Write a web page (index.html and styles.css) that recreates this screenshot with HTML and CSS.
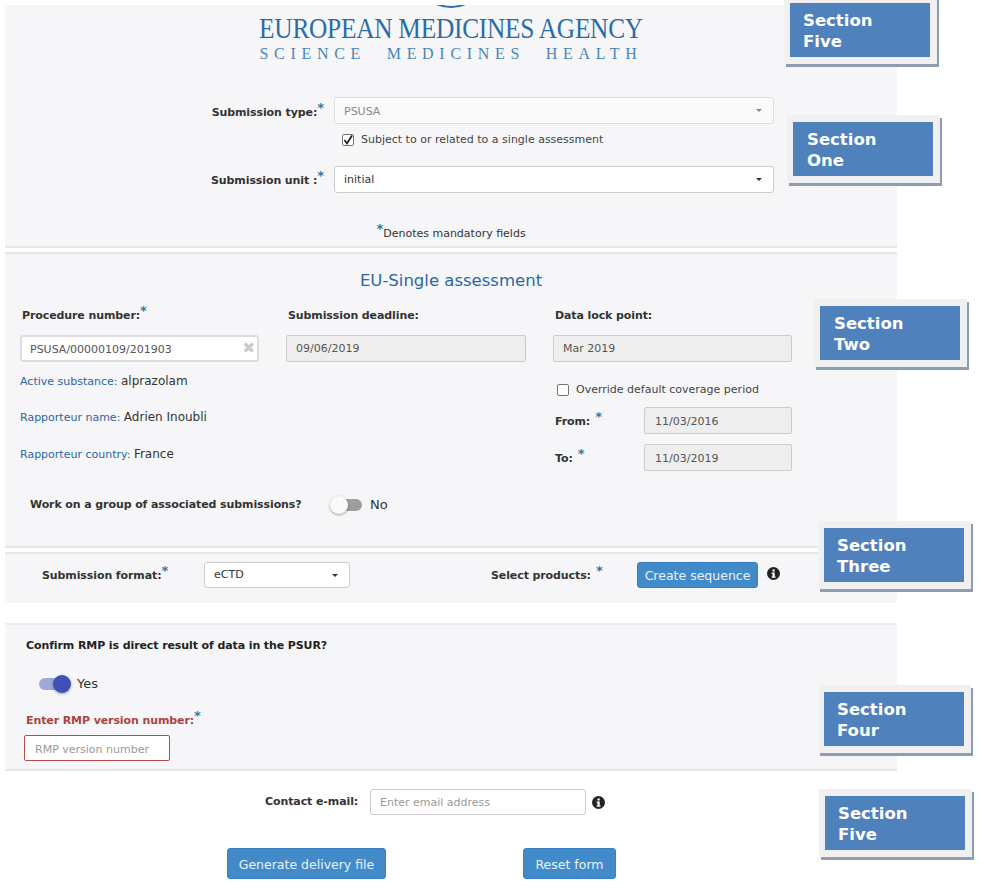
FILE: index.html
```html
<!DOCTYPE html>
<html lang="en">
<head>
<meta charset="utf-8">
<title>Submission form</title>
<link rel="stylesheet" href="styles.css">
</head>
<body>
<div class="page">
  <section class="panel s1">
    <div class="logo">
      <svg class="arc" width="40" height="4" viewBox="0 0 40 4"><path d="M1 -3 Q20 7 39 -3" fill="none" stroke="#2a6ca8" stroke-width="2"/></svg>
      <div class="logo-main">EUROPEAN MEDICINES AGENCY</div>
      <div class="logo-sub">SCIENCE MEDICINES HEALTH</div>
    </div>
    <div class="form-row">
      <div class="lbl lbl-top b">Submission type:<sup class="req">*</sup></div>
      <div class="sel wide muted">PSUSA<span class="caret grey"></span></div>
    </div>
    <div class="check-row indent">
      <span class="box"><svg width="12" height="12" viewBox="0 0 12 12"><path d="M2.5 6 L5 9.5 L10 1.5" fill="none" stroke="#222" stroke-width="1.8"/></svg></span>
      <span>Subject to or related to a single assessment</span>
    </div>
    <div class="form-row second">
      <div class="lbl b">Submission unit :<sup class="req">*</sup></div>
      <div class="sel wide white">initial<span class="caret"></span></div>
    </div>
    <div class="mandatory"><sup class="req">*</sup>Denotes mandatory fields</div>
  </section>

  <section class="panel s2">
    <h2 class="title">EU-Single assessment</h2>
    <div class="cols">
      <div class="col">
        <div class="b head">Procedure number:<sup class="req">*</sup></div>
        <div class="input white clear">PSUSA/00000109/201903<span class="x">✖</span></div>
        <div class="info first"><span class="key">Active substance:</span> <span class="val">alprazolam</span></div>
        <div class="info"><span class="key">Rapporteur name:</span> <span class="val">Adrien Inoubli</span></div>
        <div class="info third"><span class="key">Rapporteur country:</span> <span class="val">France</span></div>
      </div>
      <div class="col">
        <div class="b head">Submission deadline:</div>
        <div class="input off">09/06/2019</div>
      </div>
      <div class="col">
        <div class="b head">Data lock point:</div>
        <div class="input off">Mar 2019</div>
        <div class="check-row over"><span class="box"></span><span>Override default coverage period</span></div>
        <div class="date-row"><span class="b date-lbl">From:<sup class="req gap">*</sup></span><div class="input off date">11/03/2016</div></div>
        <div class="date-row"><span class="b date-lbl">To:<sup class="req gap">*</sup></span><div class="input off date">11/03/2019</div></div>
      </div>
    </div>
    <div class="group-row">
      <span class="b group-q">Work on a group of associated submissions?</span>
      <span class="toggle"><span class="track"></span><span class="knob"></span></span>
      <span class="val big">No</span>
    </div>
  </section>

  <section class="panel s3">
    <span class="b f-lbl">Submission format:<sup class="req">*</sup></span>
    <div class="sel fmt white">eCTD<span class="caret"></span></div>
    <span class="b p-lbl">Select products:<sup class="req gap">*</sup></span>
    <button class="btn seq" type="button">Create sequence</button>
    <svg class="i-icon" width="13" height="13" viewBox="0 0 13 13"><circle cx="6.5" cy="6.5" r="6.5" fill="#222"/><rect x="5.5" y="2.5" width="2.2" height="2" fill="#fff"/><path d="M4.6 5.5H7.7V9.6H8.6V10.8H4.6V9.6H5.5V6.7H4.6Z" fill="#fff"/></svg>
  </section>

  <section class="panel s4">
    <div class="b q4">Confirm RMP is direct result of data in the PSUR?</div>
    <div class="yes-row">
      <span class="toggle on"><span class="track"></span><span class="knob"></span></span>
      <span class="val big">Yes</span>
    </div>
    <div class="b red">Enter RMP version number:<sup class="req">*</sup></div>
    <div class="input rmp">RMP version number</div>
  </section>

  <section class="s5">
    <div class="mail-row">
      <span class="b mail-lbl">Contact e-mail:</span>
      <div class="input mail">Enter email address</div>
      <svg class="i-icon" width="13" height="13" viewBox="0 0 13 13"><circle cx="6.5" cy="6.5" r="6.5" fill="#222"/><rect x="5.5" y="2.5" width="2.2" height="2" fill="#fff"/><path d="M4.6 5.5H7.7V9.6H8.6V10.8H4.6V9.6H5.5V6.7H4.6Z" fill="#fff"/></svg>
    </div>
    <div class="actions">
      <button class="btn gen" type="button">Generate delivery file</button>
      <button class="btn reset" type="button">Reset form</button>
    </div>
  </section>

  <div class="tag t-a"><div class="tag-in">Section<br>Five</div></div>
  <div class="tag t-b"><div class="tag-in">Section<br>One</div></div>
  <div class="tag t-c"><div class="tag-in">Section<br>Two</div></div>
  <div class="tag t-d"><div class="tag-in">Section<br>Three</div></div>
  <div class="tag t-e"><div class="tag-in">Section<br>Four</div></div>
  <div class="tag t-f"><div class="tag-in">Section<br>Five</div></div>
</div>
</body>
</html>
```
FILE: styles.css
```css
* { box-sizing: border-box; }
html, body { margin: 0; background: #fff; }
body { font: 11px/14px "DejaVu Sans", Verdana, sans-serif; color: #333; }
.page { position: relative; width: 982px; height: 888px; padding-top: 5px; overflow: hidden; }
.panel { margin-left: 5px; width: 892px; background: #f6f6f8; }
.b { font-weight: 700; letter-spacing: -0.1px; }
.req { color: #2a7ba6; font-size: 13px; line-height: 0; vertical-align: 4px; font-weight: 700; letter-spacing: 0; }
.req.gap { margin-left: 5px; }

.s1 { height: 243px; border-bottom: 2px solid #e6e6e9; }
.logo { text-align: center; height: 92px; color: #2a6ca8; font-family: "Liberation Serif", serif; }
.arc { display: block; margin: 0 auto; }
.logo-main { font-size: 30px; line-height: 30px; letter-spacing: -0.3px; margin-top: 4px; white-space: nowrap; transform: scaleX(0.845); }
.logo-sub { font-size: 16px; line-height: 18px; letter-spacing: 5.7px; word-spacing: 11px; margin-top: 2px; color: #4a85b8; white-space: nowrap; }
.form-row { display: flex; align-items: center; }
.form-row .lbl { width: 320px; padding: 3px 1px 0 0; text-align: right; white-space: nowrap; }
.form-row .lbl-top { padding-top: 5px; }
.form-row.second { margin-top: 19px; }
.sel { position: relative; height: 27px; line-height: 26px; padding-left: 9px; border: 1px solid #ddd; border-radius: 3px; background: #fafafa; }
.sel.muted { line-height: 27px; }
.sel.white { background: #fff; border-color: #ccc; }
.sel.wide { width: 440px; margin-left: 9px; }
.muted { color: #888; }
.caret { position: absolute; right: 11px; top: 11px; width: 0; height: 0; border: 3px solid transparent; border-top: 3px solid #333; border-bottom: 0; }
.caret.grey { border-top-color: #888; }
.check-row { display: flex; align-items: center; gap: 7px; color: #444; }
.indent { margin: 9px 0 0 337px; }
.box { display: block; width: 12px; height: 12px; border: 1px solid #767676; border-radius: 2px; background: #fff; line-height: 0; }
.box svg { margin: -1px; }
.mandatory { text-align: center; margin-top: 34px; }

.s2 { height: 296px; margin-top: 4px; border-top: 2px solid #e6e6e9; border-bottom: 2px solid #e6e6e9; padding: 17px 15px 0; }
.title { margin: 0; text-align: center; font-size: 16.5px; line-height: 20px; font-weight: 400; color: #2a66a8; }
.cols { display: grid; grid-template-columns: 239px 240px 239px; column-gap: 27px; margin-top: 18px; }
.head { padding-left: 2px; height: 14px; }
.input { height: 27px; line-height: 26px; padding-left: 9px; border: 2px solid #e0e0e0; border-radius: 2px; color: #555; position: relative; }
.col .input { margin-top: 12px; }
.white { background: #fff; }
.input.clear { border-color: #ddd; border-radius: 3px; padding-left: 8px; }
.x { position: absolute; right: 2px; top: -2px; color: #cacaca; font-size: 15px; }
.off { background: #eee; border-width: 1px; border-color: #ccc; width: 100%; }
.col .date { margin-top: 0; width: 148px; line-height: 28px; padding-left: 10px; }
.info { margin-top: 22px; height: 14px; }
.info.first { margin-top: 12px; }
.info.third { margin-top: 23px; }
.key { color: #2a66a8; }
.val { font-size: 12px; color: #333; }
.val.big { font-size: 13px; }
.over { margin: 21px 0 0 4px; }
.date-row { display: flex; justify-content: space-between; align-items: center; margin-top: 10px; }
.date-lbl { padding: 2px 0 0 2px; }
.group-row { display: flex; align-items: center; margin: 25px 0 0 10px; }
.group-q { width: 300px; white-space: nowrap; }
.toggle { position: relative; display: block; width: 32px; height: 18px; }
.track { position: absolute; left: 4px; right: 0; top: 3px; height: 12px; border-radius: 6px; background: #9e9e9e; }
.knob { position: absolute; left: 0; top: 0; width: 18px; height: 18px; border-radius: 50%; background: #fafafa; box-shadow: 0 1px 3px rgba(0,0,0,.35); }
.group-row .val { margin-left: 8px; }

.s3 { height: 51px; margin-top: 4px; border-top: 2px solid #e6e6e9; display: flex; align-items: center; padding: 0 0 7px 37px; }
.f-lbl { width: 162px; padding-top: 2px; white-space: nowrap; }
.fmt { width: 146px; height: 26px; line-height: 24px; }
.p-lbl { margin-left: 141px; width: 146px; padding-top: 2px; white-space: nowrap; }
.btn { height: 26px; padding: 0; border: 1px solid #3a80c0; border-radius: 3px; background: #428bca; color: #eaf2f9; font: 12.5px "DejaVu Sans", Verdana, sans-serif; }
.seq { width: 121px; }
.i-icon { display: block; margin: 0 0 3px 9px; }

.s4 { height: 148px; margin-top: 20px; border-top: 2px solid #ececef; border-bottom: 2px solid #e6e6e9; padding: 14px 0 0 21px; }
.q4 { color: #222; }
.yes-row { display: flex; align-items: center; margin: 22px 0 0 13px; gap: 6px; }
.toggle.on .track { left: 0; right: 4px; background: #9fa8da; }
.toggle.on .knob { left: 14px; background: #3f51b5; }
.red { color: #a94442; margin-top: 21px; }
.col .input.rmp, .rmp { margin-top: 7px; margin-left: -2px; width: 146px; height: 26px; line-height: 27px; padding-left: 10px; border: 1px solid #b94a48; background: #fff; color: #999; border-radius: 2px; }

.s5 { padding-top: 18px; }
.mail-row { display: flex; align-items: center; padding-left: 265px; }
.mail-lbl { width: 105px; white-space: nowrap; }
.mail { width: 216px; height: 26px; line-height: 26px; border: 1px solid #ccc; border-radius: 3px; background: #fff; color: #999; }
.mail-row .i-icon { margin: 1px 0 0 6px; }
.actions { display: flex; padding: 33px 0 0 227px; }
.gen { width: 159px; height: 31px; padding-top: 2px; }
.reset { width: 93px; height: 31px; margin-left: 137px; padding-top: 2px; }

.tag { position: absolute; width: 153px; height: 68px; padding: 7px 0 0 6px; background: #f0f0f0; box-shadow: 2px 3px 0 #8f9db3; }
.tag-in { width: 140px; height: 54px; padding: 7px 0 0 13px; background: #4f81bd; color: #fff; font-size: 16.5px; line-height: 21px; font-weight: 700; }
.t-a { left: 784px; top: -4px; }
.t-b { left: 787px; top: 115px; }
.t-c { left: 814px; top: 299px; }
.t-d { left: 818px; top: 521px; }
.t-e { left: 818px; top: 685px; }
.t-f { left: 819px; top: 789px; }
.t-b .tag-in, .t-c .tag-in { padding-left: 14px; }
```
